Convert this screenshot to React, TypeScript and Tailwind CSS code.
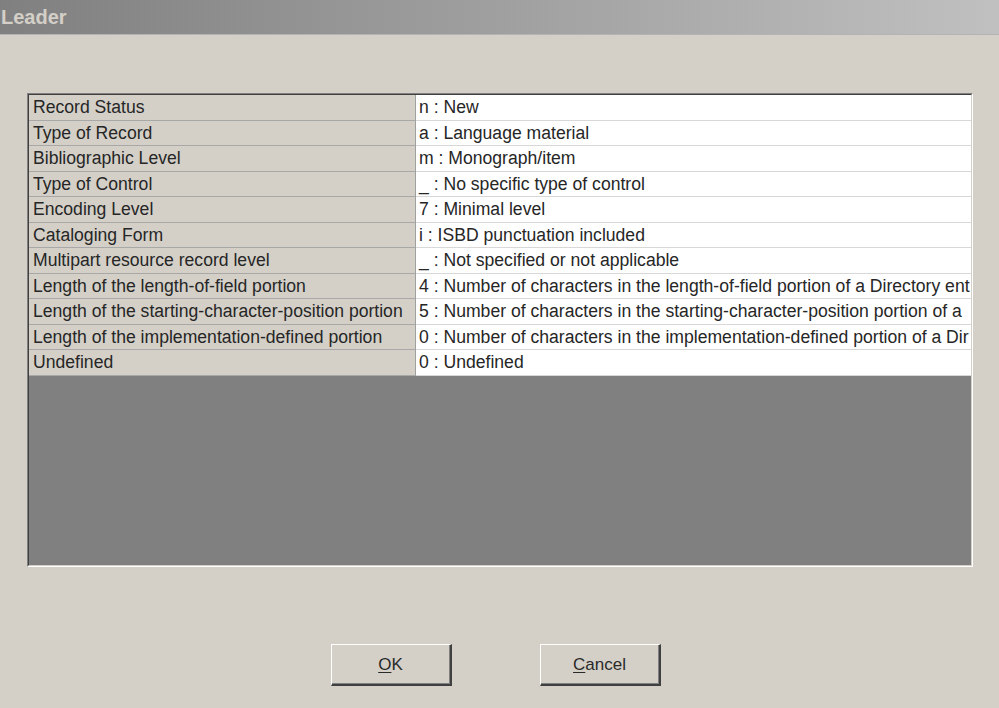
import React from "react";

const rows: [string, string][] = [
  ["Record Status", "n : New"],
  ["Type of Record", "a : Language material"],
  ["Bibliographic Level", "m : Monograph/item"],
  ["Type of Control", "_ : No specific type of control"],
  ["Encoding Level", "7 : Minimal level"],
  ["Cataloging Form", "i : ISBD punctuation included"],
  ["Multipart resource record level", "_ : Not specified or not applicable"],
  ["Length of the length-of-field portion", "4 : Number of characters in the length-of-field portion of a Directory ent"],
  ["Length of the starting-character-position portion", "5 : Number of characters in the starting-character-position portion of a"],
  ["Length of the implementation-defined portion", "0 : Number of characters in the implementation-defined portion of a Dir"],
  ["Undefined", "0 : Undefined"],
];

function Btn({ u, rest }: { u: string; rest: string }) {
  return (
    <button className="w-[121px] h-[42px] bg-[#d4d0c8] border-t border-l border-t-white border-l-white border-b-2 border-r-2 border-b-[#404040] border-r-[#404040] text-[17px] text-[#2a2a2a] flex items-center justify-center shadow-[inset_-1px_-1px_0_#808080]">
      <span className="underline underline-offset-2">{u}</span>
      <span>{rest}</span>
    </button>
  );
}

export default function App() {
  return (
    <div
      className="w-[999px] h-[708px] bg-[#d4d0c8] flex flex-col overflow-hidden"
      style={{ fontFamily: '"Liberation Sans", Arial, sans-serif' }}
    >
      <div className="h-[35px] shrink-0 bg-gradient-to-r from-[#808080] to-[#c0c0c0] border-b border-b-[#b4b4b4] flex items-center">
        <span className="text-[#d4d0c8] font-bold text-[20px] pl-[1px]">
          Leader
        </span>
      </div>
      <div className="pl-[27px] pt-[58px]">
        <div className="w-[946px] h-[474px] border-t border-l border-t-[#808080] border-l-[#808080] border-b border-r border-b-white border-r-white">
          <div className="w-full h-full border-t border-l border-t-[#404040] border-l-[#404040] border-b border-r border-b-[#d4d0c8] border-r-[#d4d0c8] bg-[#808080] flex flex-col overflow-hidden">
            {rows.map(([k, v]) => (
              <div key={k} className="flex h-[25.5px] shrink-0 text-[17.6px] text-[#262626] leading-none">
                <div className="w-[387px] shrink-0 bg-[#d4d0c8] border-r border-r-[#a0a0a0] border-b border-b-[#a8a8a8] pl-[4px] pt-[2px] flex items-center whitespace-nowrap overflow-hidden">
                  {k}
                </div>
                <div className="flex-1 bg-white border-b border-b-[#d8d8d8] pl-[3px] pt-[2px] flex items-center whitespace-nowrap overflow-hidden">
                  {v}
                </div>
              </div>
            ))}
          </div>
        </div>
      </div>
      <div className="flex justify-center pt-[77px]">
        <div className="ml-[-8px] flex gap-[88px]">
          <Btn u="O" rest="K" />
          <Btn u="C" rest="ancel" />
        </div>
      </div>
    </div>
  );
}
